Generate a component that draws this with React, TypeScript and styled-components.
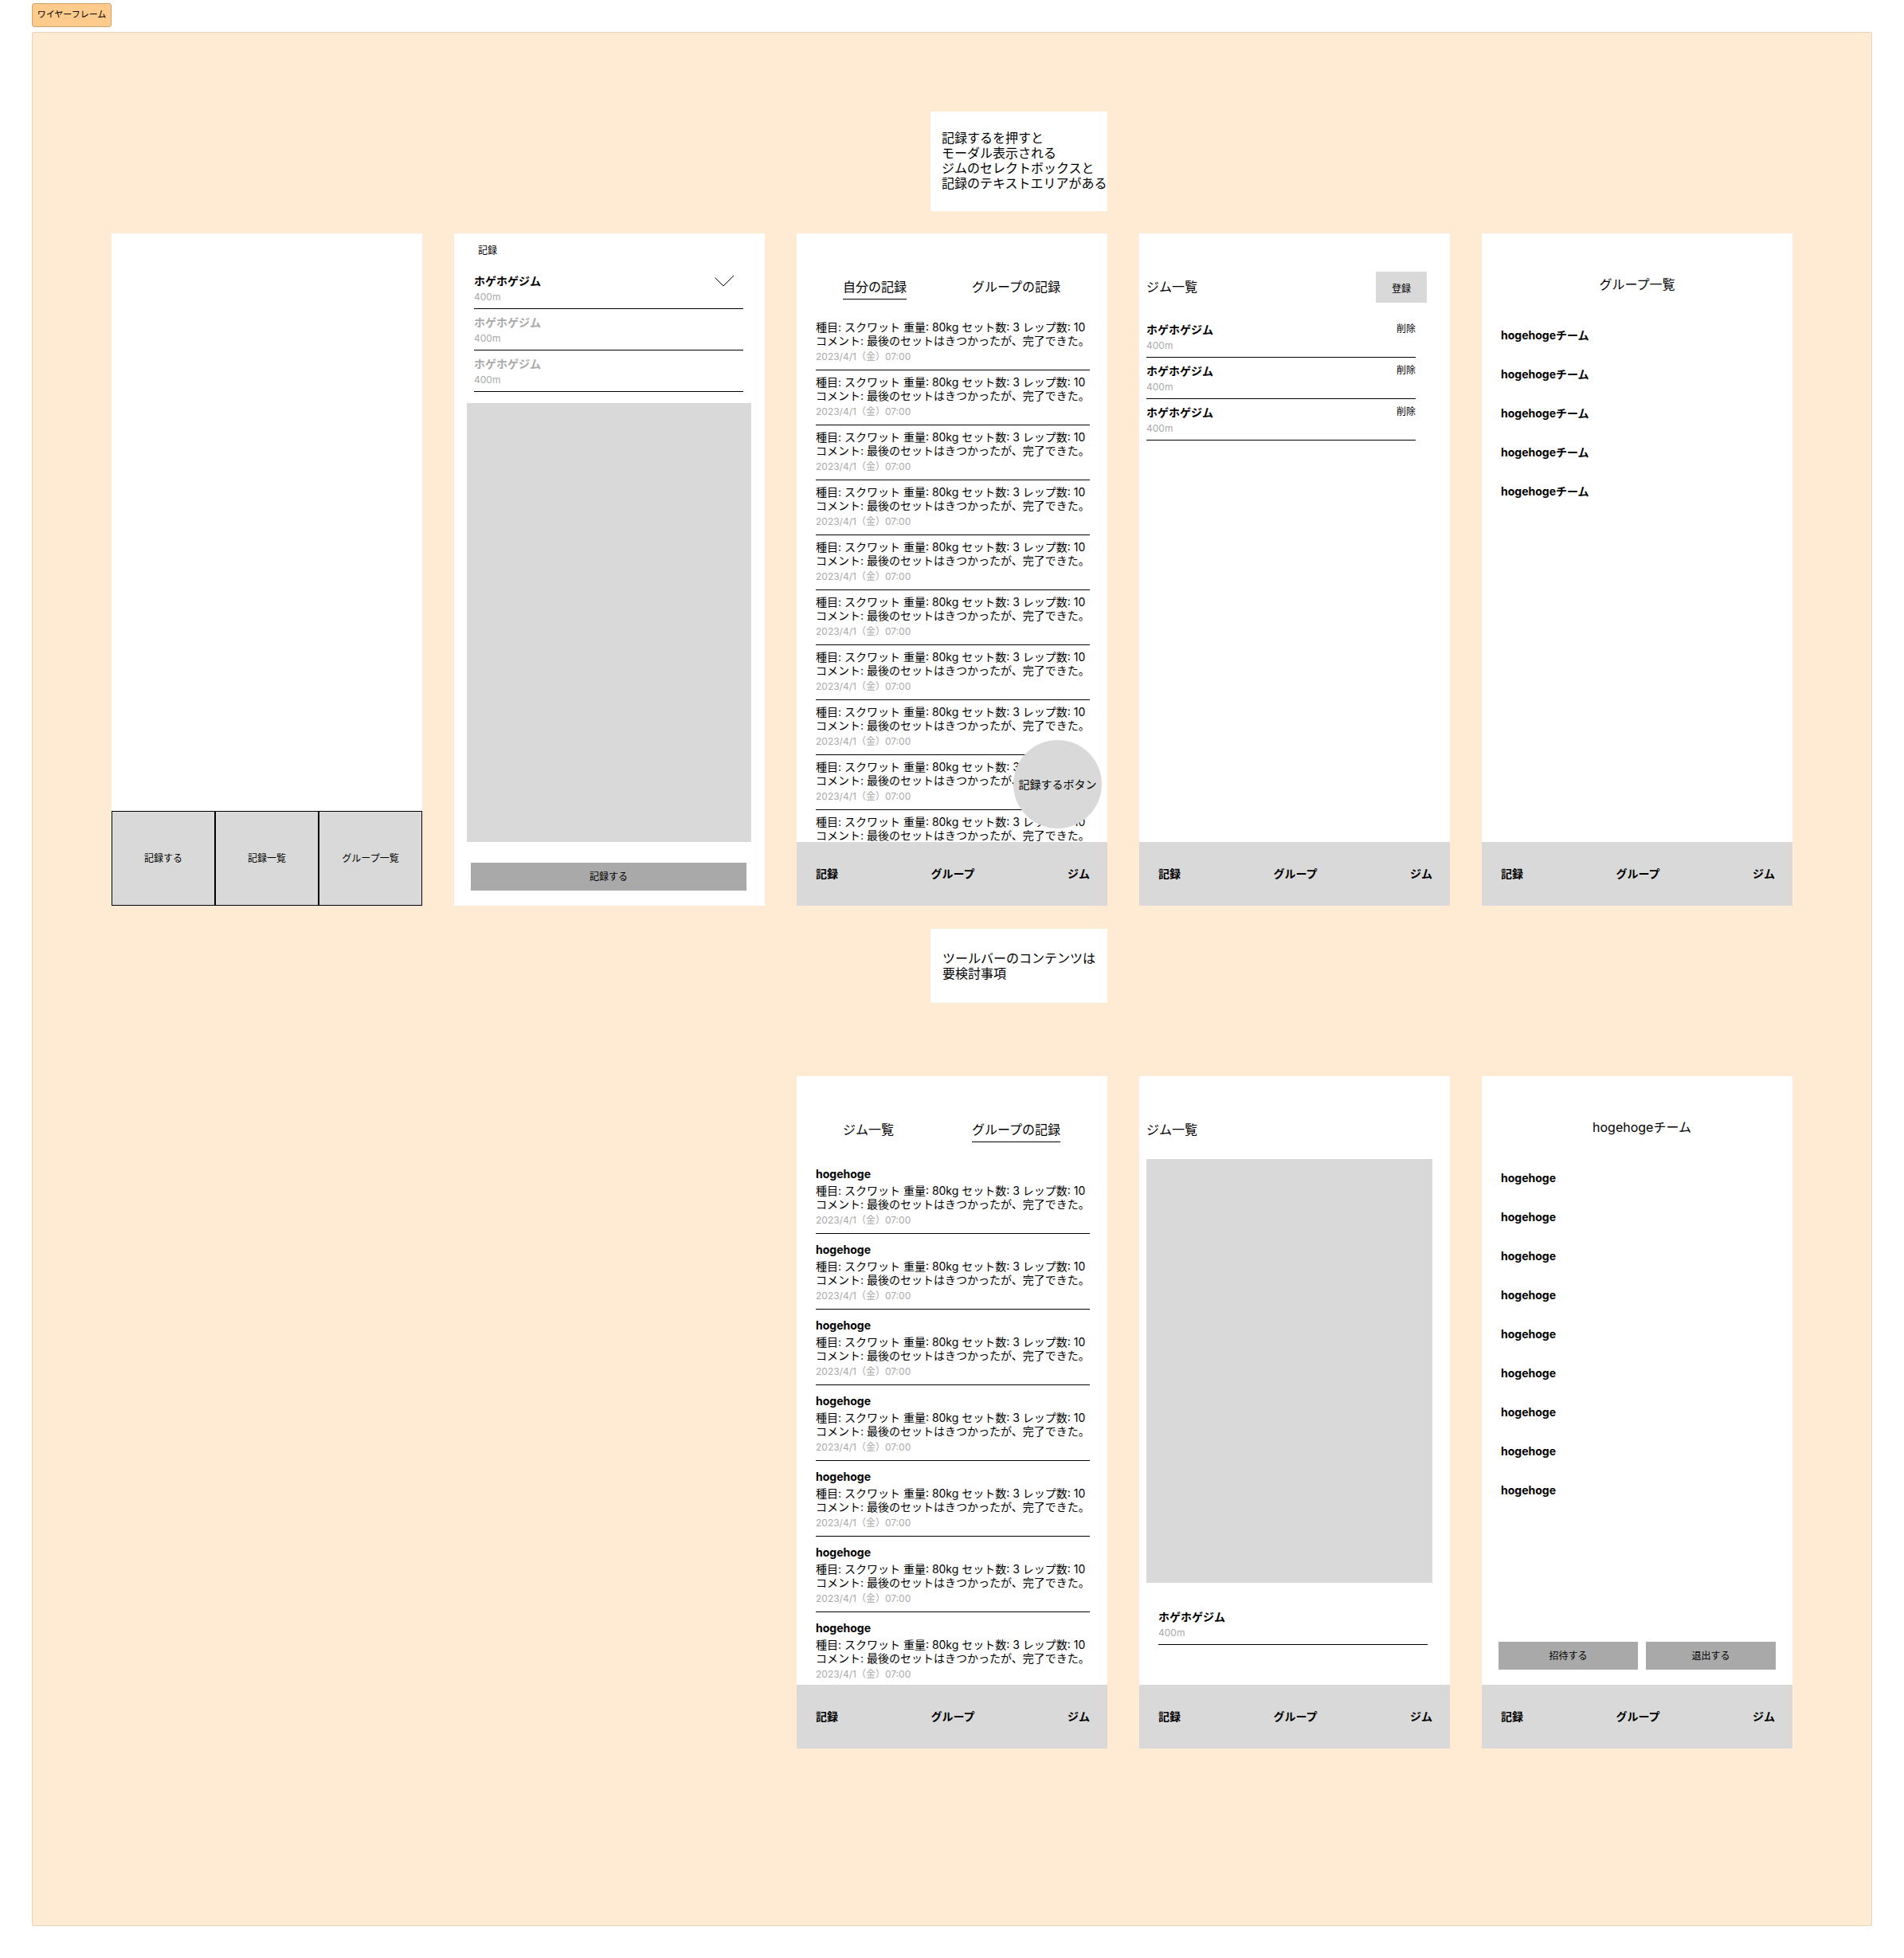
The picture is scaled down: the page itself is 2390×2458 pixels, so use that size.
import React from "react";
import styled, { createGlobalStyle, css } from "styled-components";

const color = {
  ink: "#000000",
  muted: "#a9a9a9",
  block: "#d9d9d9",
  action: "#a9a9a9",
  paper: "#ffffff",
  section: "#ffebd3",
  sectionLine: "#e6d3be",
  tag: "#ffcb8d",
  tagLine: "#cca271",
};

const GlobalStyle = createGlobalStyle`
  *, *::before, *::after { box-sizing: border-box; }
  body {
    margin: 0;
    background: ${color.paper};
    color: ${color.ink};
    font-family: Inter, "Noto Sans CJK JP", sans-serif;
    font-size: 14px;
    line-height: 17px;
  }
  h1, h2, h3, p, ul { margin: 0; padding: 0; font: inherit; }
  ul { list-style: none; }
  button, textarea {
    margin: 0;
    padding: 0;
    border: 0;
    border-radius: 0;
    background: none;
    color: inherit;
    font: inherit;
    text-align: left;
    white-space: nowrap;
  }
  button { cursor: pointer; }
  a { color: inherit; text-decoration: none; }
`;

const small = css`
  font-size: 12px;
  line-height: 15px;
`;
const large = css`
  font-size: 16px;
  line-height: 19px;
`;

const Page = styled.main`
  padding: 4px 40px 40px;
`;

const Tag = styled.h1`
  display: flex;
  align-items: center;
  justify-content: center;
  width: max-content;
  min-width: 100px;
  height: 30px;
  padding: 0 5px 2px;
  border: 1px solid ${color.tagLine};
  border-radius: 3px;
  background: ${color.tag};
  font-size: 11px;
  line-height: 14px;
`;

const Section = styled.section`
  display: grid;
  grid-template-columns: repeat(5, minmax(0, 1fr));
  column-gap: 40px;
  margin-top: 6px;
  padding: 99px 99px 222px;
  border: 1px solid ${color.sectionLine};
  border-radius: 2px;
  background: ${color.section};
`;

const Note = styled.p<{ $kind: "top" | "middle" }>`
  ${large}
  grid-column: 3;
  justify-self: end;
  width: 222px;
  background: ${color.paper};
  white-space: pre;
  ${(p) =>
    p.$kind === "top"
      ? "padding: 24px 0 25px 14px; margin-bottom: 28px;"
      : "padding: 28px 0 27px 15px; margin: 29px 0 92px;"}
`;

const Screen = styled.article<{ $column?: number }>`
  ${(p) => p.$column && `grid-column: ${p.$column};`}
  display: flex;
  flex-direction: column;
  min-height: 844px;
  background: ${color.paper};
`;

const Spacer = styled.div`
  flex: 1;
`;

/* Home screen */
const TileRow = styled.nav`
  display: grid;
  grid-template-columns: repeat(3, 1fr);
  margin-top: auto;
`;

const Tile = styled.button`
  ${small}
  height: 119px;
  border: 1px solid ${color.ink};
  background: ${color.block};
  text-align: center;
`;

/* Record form */
const FormTitle = styled.h2`
  ${small}
  padding: 14px 30px;
`;

const FormArea = styled.textarea`
  flex: 1;
  display: block;
  margin: 14px 17px 26px 16px;
  background: ${color.block};
  resize: none;
`;

const ActionRow = styled.div`
  display: grid;
  grid-auto-flow: column;
  gap: 10px;
  padding: 0 21px 19px;
`;

const WideActionRow = styled(ActionRow)`
  padding-right: 23px;
`;

const PairActionRow = styled(ActionRow)`
  grid-template-columns: 175fr 163fr;
`;

const ActionButton = styled.button`
  ${small}
  height: 35px;
  background: ${color.action};
  text-align: center;
`;

/* Gym list */
const GymList = styled.ul<{ $left: number; $right: number }>`
  padding: 0 ${(p) => p.$right}px 0 ${(p) => p.$left}px;
`;

const GymRow = styled.li`
  display: flex;
  justify-content: space-between;
  align-items: flex-start;
  height: 52px;
  padding-top: 8px;
  border-bottom: 1px solid ${color.ink};
`;

const GymName = styled.h3<{ $muted?: boolean }>`
  font-weight: 700;
  color: ${(p) => (p.$muted ? color.muted : color.ink)};
`;

const Distance = styled.p`
  ${small}
  margin-top: 4px;
  color: ${color.muted};
`;

const TextButton = styled.button`
  ${small}
`;

const ChevronButton = styled.button`
  display: flex;
  margin-right: 11px;
`;

const GymHeader = styled.header`
  display: flex;
  align-items: center;
  justify-content: space-between;
  height: 39px;
  margin: 48px 29px 17px 9px;
`;

const ScreenTitle = styled.h2`
  ${large}
`;

const RegisterButton = styled.button`
  ${small}
  width: 64px;
  height: 39px;
  padding-top: 3px;
  background: ${color.block};
  text-align: center;
`;

const MapArea = styled.div`
  flex: 1;
  margin: 0 22px 26px 9px;
  background: ${color.block};
`;

const GymCard = styled.div`
  margin-bottom: 50px;
`;

/* Records */
const TabBar = styled.div`
  display: grid;
  grid-template-columns: 162px auto;
  justify-items: start;
  padding: 58px 58px 20px;
`;

const Tab = styled.button`
  ${large}
  padding-bottom: 5px;
  border-bottom: 1px solid transparent;

  &[aria-selected="true"] {
    border-bottom-color: ${color.ink};
  }
`;

const Feed = styled.div`
  position: relative;
  flex: 1 1 0;
  min-height: 0;
`;

const FeedList = styled.ul<{ $height: number }>`
  height: ${(p) => p.$height}px;
  padding: 0 22px 0 24px;
  overflow: hidden;
`;

const RecordRow = styled.li<{ $named: boolean }>`
  padding: ${(p) => (p.$named ? 11 : 6)}px 0 9px;
  border-bottom: 1px solid ${color.ink};
`;

const Author = styled.h3`
  margin-bottom: 4px;
  font-weight: 700;
`;

const RecordText = styled.p`
  white-space: pre;
`;

const RecordDate = styled.p`
  ${small}
  margin-top: 4px;
  color: ${color.muted};
`;

const RoundButton = styled.button`
  position: absolute;
  right: 7px;
  bottom: 17px;
  width: 111px;
  height: 111px;
  border-radius: 50%;
  background: ${color.block};
  text-align: center;
`;

/* Groups */
const GroupTitle = styled.h2<{ $indent?: number }>`
  ${large}
  padding: 55px 0 45px ${(p) => p.$indent ?? 0}px;
  text-align: center;
`;

const NameList = styled.ul`
  display: grid;
  gap: 32px;
  padding: 0 24px;
  font-weight: 700;
`;

/* Bottom bar */
const Bar = styled.nav`
  display: flex;
  align-items: center;
  justify-content: space-between;
  height: 80px;
  padding: 0 22px 2px 24px;
  background: ${color.block};
  font-weight: 700;
`;

const BottomBar = () => (
  <Bar aria-label="ツールバー">
    <a href="#records">記録</a>
    <a href="#groups">グループ</a>
    <a href="#gyms">ジム</a>
  </Bar>
);

const Chevron = () => (
  <svg width="25" height="17" viewBox="0 0 25 17" fill="none" stroke="#000" aria-hidden="true">
    <path d="M0.5 4.5L11 15L24 2" />
  </svg>
);

const Gym = ({ muted, action }: { muted?: boolean; action?: React.ReactNode }) => (
  <GymRow>
    <div>
      <GymName $muted={muted}>ホゲホゲジム</GymName>
      <Distance>400m</Distance>
    </div>
    {action}
  </GymRow>
);

const recordText =
  "種目: スクワット 重量: 80kg セット数: 3 レップ数: 10\nコメント: 最後のセットはきつかったが、完了できた。";

const range = (n: number) => Array.from({ length: n }, (_, i) => i);

const Records = ({ count, author }: { count: number; author?: string }) => (
  <FeedList $height={661}>
    {range(count).map((i) => (
      <RecordRow key={i} $named={Boolean(author)}>
        {author && <Author>{author}</Author>}
        <RecordText>{recordText}</RecordText>
        {(author || i < count - 1) && <RecordDate>2023/4/1（金）07:00</RecordDate>}
      </RecordRow>
    ))}
  </FeedList>
);

const Tabs = ({ labels, active }: { labels: string[]; active: number }) => (
  <TabBar role="tablist">
    {labels.map((label, i) => (
      <Tab key={label} role="tab" aria-selected={i === active}>
        {label}
      </Tab>
    ))}
  </TabBar>
);

const Names = ({ name, count }: { name: string; count: number }) => (
  <NameList>
    {range(count).map((i) => (
      <li key={i}>{name}</li>
    ))}
  </NameList>
);

export default function App() {
  return (
    <>
      <GlobalStyle />
      <Page lang="ja">
        <Tag>ワイヤーフレーム</Tag>
        <Section>
          <Note $kind="top">
            {"記録するを押すと\nモーダル表示される\nジムのセレクトボックスと\n記録のテキストエリアがある"}
          </Note>

          <Screen $column={1}>
            <TileRow>
              <Tile>記録する</Tile>
              <Tile>記録一覧</Tile>
              <Tile>グループ一覧</Tile>
            </TileRow>
          </Screen>

          <Screen>
            <FormTitle>記録</FormTitle>
            <GymList $left={25} $right={27}>
              <Gym
                action={
                  <ChevronButton aria-label="ジムを選択" aria-expanded>
                    <Chevron />
                  </ChevronButton>
                }
              />
              <Gym muted />
              <Gym muted />
            </GymList>
            <FormArea aria-label="記録" />
            <WideActionRow>
              <ActionButton>記録する</ActionButton>
            </WideActionRow>
          </Screen>

          <Screen>
            <Tabs labels={["自分の記録", "グループの記録"]} active={0} />
            <Feed>
              <Records count={10} />
              <RoundButton>記録するボタン</RoundButton>
            </Feed>
            <BottomBar />
          </Screen>

          <Screen>
            <GymHeader>
              <ScreenTitle>ジム一覧</ScreenTitle>
              <RegisterButton>登録</RegisterButton>
            </GymHeader>
            <GymList $left={9} $right={43}>
              {range(3).map((i) => (
                <Gym key={i} action={<TextButton>削除</TextButton>} />
              ))}
            </GymList>
            <Spacer />
            <BottomBar />
          </Screen>

          <Screen>
            <GroupTitle>グループ一覧</GroupTitle>
            <Names name="hogehogeチーム" count={5} />
            <Spacer />
            <BottomBar />
          </Screen>

          <Note $kind="middle">{"ツールバーのコンテンツは\n要検討事項"}</Note>

          <Screen $column={3}>
            <Tabs labels={["ジム一覧", "グループの記録"]} active={1} />
            <Feed>
              <Records count={7} author="hogehoge" />
            </Feed>
            <BottomBar />
          </Screen>

          <Screen>
            <GymHeader>
              <ScreenTitle>ジム一覧</ScreenTitle>
            </GymHeader>
            <MapArea role="img" aria-label="地図" />
            <GymCard>
              <GymList $left={24} $right={28}>
                <Gym />
              </GymList>
            </GymCard>
            <BottomBar />
          </Screen>

          <Screen>
            <GroupTitle $indent={12}>hogehogeチーム</GroupTitle>
            <Names name="hogehoge" count={9} />
            <Spacer />
            <PairActionRow>
              <ActionButton>招待する</ActionButton>
              <ActionButton>退出する</ActionButton>
            </PairActionRow>
            <BottomBar />
          </Screen>
        </Section>
      </Page>
    </>
  );
}
